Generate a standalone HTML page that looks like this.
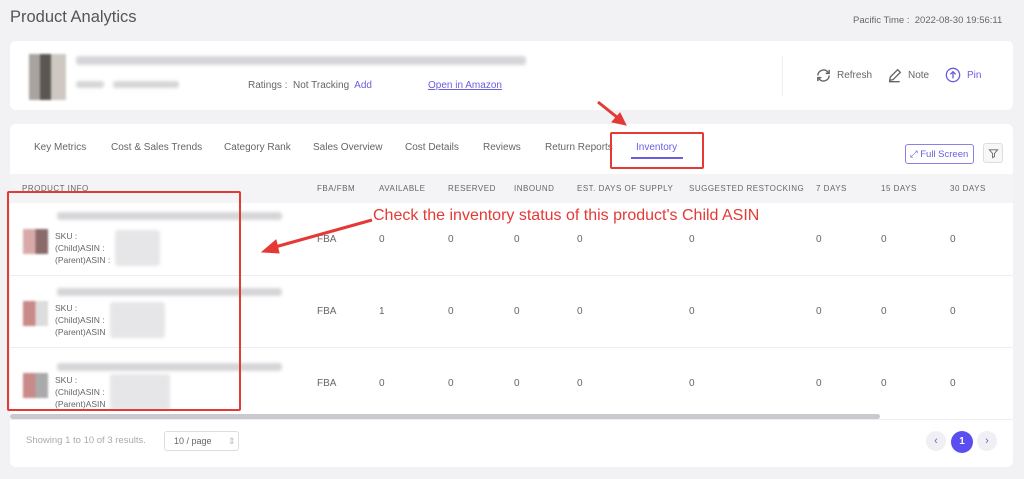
<!DOCTYPE html>
<html><head><meta charset="utf-8"><style>
*{margin:0;padding:0;box-sizing:border-box}
body{width:1024px;height:479px;background:#f2f2f4;font-family:"Liberation Sans",Arial,sans-serif;position:relative;overflow:hidden;color:#555}
.a{position:absolute}
.card{position:absolute;background:#fff;border-radius:6px}
.t{font-size:10px;color:#666;white-space:nowrap}
.h{font-size:8px;color:#666;letter-spacing:.5px;white-space:nowrap}
.blur{position:absolute;background:#d6d6d9;filter:blur(1.5px);border-radius:3px}
.red{position:absolute;border:2px solid #e53935;border-radius:2px}
</style></head><body>
<div class="a" style="left:10px;top:8px;font-size:16.5px;color:#555">Product Analytics</div>
<div class="a t" style="left:853px;top:15px;font-size:9.5px">Pacific Time :&nbsp; 2022-08-30 19:56:11</div>

<div class="card" style="left:10px;top:41px;width:1003px;height:69px">
  <div class="a" style="left:19px;top:13px;width:37px;height:46px;background:linear-gradient(90deg,#9a948e 0 30%,#3e3a36 30% 60%,#c6bfb7 60%);filter:blur(1px);opacity:.85"></div>
  <div class="blur" style="left:66px;top:15px;width:450px;height:9px"></div>
  <div class="blur" style="left:66px;top:40px;width:28px;height:7px"></div>
  <div class="blur" style="left:103px;top:40px;width:66px;height:7px"></div>
  <div class="a t" style="left:238px;top:39px">Ratings :&nbsp; Not Tracking&nbsp; <span style="color:#6a5ee0">Add</span></div>
  <div class="a t" style="left:418px;top:39px;color:#6a5ee0;text-decoration:underline">Open in Amazon</div>
  <div class="a" style="left:772px;top:15px;width:1px;height:40px;background:#eee"></div>
  <svg class="a" style="left:805px;top:26px" width="17" height="17" viewBox="0 0 24 24" fill="none" stroke="#666" stroke-width="2"><path d="M4 12a8 8 0 0 1 14-5l2 2M20 4v5h-5M20 12a8 8 0 0 1-14 5l-2-2M4 20v-5h5"/></svg>
  <div class="a t" style="left:827px;top:29px">Refresh</div>
  <svg class="a" style="left:877px;top:26px" width="16" height="16" viewBox="0 0 24 24" fill="none" stroke="#666" stroke-width="2"><path d="M4 20l1-5L16 4l4 4L9 19zM3 22h16"/></svg>
  <div class="a t" style="left:898px;top:29px">Note</div>
  <svg class="a" style="left:935px;top:26px" width="16" height="16" viewBox="0 0 24 24" fill="none" stroke="#6a5ee0" stroke-width="2"><circle cx="12" cy="12" r="10"/><path d="M12 17V8M8 11l4-4 4 4"/></svg>
  <div class="a t" style="left:957px;top:29px;color:#6a5ee0">Pin</div>
</div>

<div class="card" style="left:10px;top:124px;width:1003px;height:343px;overflow:hidden">
  <div class="a t" style="left:24px;top:18px">Key Metrics</div>
  <div class="a t" style="left:101px;top:18px">Cost &amp; Sales Trends</div>
  <div class="a t" style="left:214px;top:18px">Category Rank</div>
  <div class="a t" style="left:303px;top:18px">Sales Overview</div>
  <div class="a t" style="left:395px;top:18px">Cost Details</div>
  <div class="a t" style="left:473px;top:18px">Reviews</div>
  <div class="a t" style="left:535px;top:18px">Return Reports</div>
  <div class="a t" style="left:626px;top:18px;color:#6a5ee0">Inventory</div>
  <div class="a" style="left:621px;top:33px;width:52px;height:2px;background:#6a5ee0"></div>
  <div class="a" style="left:895px;top:20px;width:69px;height:20px;border:1px solid #8a80e8;border-radius:3px;font-size:9.5px;color:#6a5ee0;padding:4px 0 0 4px;white-space:nowrap">⤢ Full Screen</div>
  <div class="a" style="left:973px;top:19px;width:20px;height:20px;border:1px solid #ddd;border-radius:3px;background:#f7f7f7"><svg style="margin:4px 0 0 4px" width="11" height="11" viewBox="0 0 24 24" fill="none" stroke="#666" stroke-width="2"><path d="M3 4h18l-7 8v7l-4 2v-9z"/></svg></div>
  <div class="a" style="left:0;top:50px;width:1003px;height:29px;background:#f4f4f7"></div>
  <div class="a h" style="left:12px;top:60px">PRODUCT INFO</div>
  <div class="a h" style="left:307px;top:60px">FBA/FBM</div>
  <div class="a h" style="left:369px;top:60px">AVAILABLE</div>
  <div class="a h" style="left:438px;top:60px">RESERVED</div>
  <div class="a h" style="left:504px;top:60px">INBOUND</div>
  <div class="a h" style="left:567px;top:60px">EST. DAYS OF SUPPLY</div>
  <div class="a h" style="left:679px;top:60px">SUGGESTED RESTOCKING</div>
  <div class="a h" style="left:806px;top:60px">7 DAYS</div>
  <div class="a h" style="left:871px;top:60px">15 DAYS</div>
  <div class="a h" style="left:940px;top:60px">30 DAYS</div>
  <div class="a" style="left:0;top:151px;width:1003px;height:1px;background:#eee"></div>
  <div class="a" style="left:0;top:223px;width:1003px;height:1px;background:#eee"></div>
  <div class="a" style="left:0;top:290px;width:870px;height:5px;background:#c9c9d0;border-radius:3px"></div>
  <div class="a" style="left:0;top:295px;width:1003px;height:1px;background:#eee"></div>

  <div class="a" style="left:0;top:79px;width:300px;height:215px">
    <div class="blur" style="left:47px;top:9px;width:225px;height:8px"></div>
    <div class="a" style="left:13px;top:26px;width:25px;height:25px;background:linear-gradient(90deg,#d9a9a9 50%,#8a6a6a 50%);filter:blur(1px)"></div>
    <div class="a t" style="left:45px;top:27px;font-size:8.5px;line-height:12px">SKU :<br>(Child)ASIN :<br>(Parent)ASIN :</div>
    <div class="blur" style="left:105px;top:27px;width:45px;height:36px;background:#e6e6e8"></div>
    <div class="blur" style="left:47px;top:85px;width:225px;height:8px"></div>
    <div class="a" style="left:13px;top:98px;width:25px;height:25px;background:linear-gradient(90deg,#c98a8a 50%,#ddd 50%);filter:blur(1px)"></div>
    <div class="a t" style="left:45px;top:99px;font-size:8.5px;line-height:12px">SKU :<br>(Child)ASIN :<br>(Parent)ASIN</div>
    <div class="blur" style="left:100px;top:99px;width:55px;height:36px;background:#e6e6e8"></div>
    <div class="blur" style="left:47px;top:160px;width:225px;height:8px"></div>
    <div class="a" style="left:13px;top:170px;width:25px;height:25px;background:linear-gradient(90deg,#c98a8a 50%,#aaa 50%);filter:blur(1px)"></div>
    <div class="a t" style="left:45px;top:171px;font-size:8.5px;line-height:12px">SKU :<br>(Child)ASIN :<br>(Parent)ASIN</div>
    <div class="blur" style="left:100px;top:171px;width:60px;height:36px;background:#e6e6e8"></div>
  </div>
  <div class="a t" style="left:307px;top:110px">FBA</div><div class="a t" style="left:369px;top:110px">0</div><div class="a t" style="left:438px;top:110px">0</div><div class="a t" style="left:504px;top:110px">0</div><div class="a t" style="left:567px;top:110px">0</div><div class="a t" style="left:679px;top:110px">0</div><div class="a t" style="left:806px;top:110px">0</div><div class="a t" style="left:871px;top:110px">0</div><div class="a t" style="left:940px;top:110px">0</div>
  <div class="a t" style="left:307px;top:182px">FBA</div><div class="a t" style="left:369px;top:182px">1</div><div class="a t" style="left:438px;top:182px">0</div><div class="a t" style="left:504px;top:182px">0</div><div class="a t" style="left:567px;top:182px">0</div><div class="a t" style="left:679px;top:182px">0</div><div class="a t" style="left:806px;top:182px">0</div><div class="a t" style="left:871px;top:182px">0</div><div class="a t" style="left:940px;top:182px">0</div>
  <div class="a t" style="left:307px;top:254px">FBA</div><div class="a t" style="left:369px;top:254px">0</div><div class="a t" style="left:438px;top:254px">0</div><div class="a t" style="left:504px;top:254px">0</div><div class="a t" style="left:567px;top:254px">0</div><div class="a t" style="left:679px;top:254px">0</div><div class="a t" style="left:806px;top:254px">0</div><div class="a t" style="left:871px;top:254px">0</div><div class="a t" style="left:940px;top:254px">0</div>

  <div class="a t" style="left:16px;top:311px;color:#aaa;font-size:9.5px">Showing 1 to 10 of 3 results.</div>
  <div class="a t" style="left:154px;top:307px;width:75px;height:20px;border:1px solid #ddd;border-radius:3px;font-size:9px;padding:4px 0 0 9px">10 / page <span style="color:#bbb;margin-left:14px">⇕</span></div>
  <div class="a" style="left:916px;top:307px;width:20px;height:20px;border-radius:50%;background:#f0f0f4;color:#6a5ee0;font-size:11px;text-align:center;line-height:20px">‹</div>
  <div class="a" style="left:941px;top:307px;width:22px;height:22px;border-radius:50%;background:#5b4ef0;color:#fff;font-size:10px;font-weight:bold;text-align:center;line-height:22px">1</div>
  <div class="a" style="left:967px;top:307px;width:20px;height:20px;border-radius:50%;background:#f0f0f4;color:#6a5ee0;font-size:11px;text-align:center;line-height:20px">›</div>
</div>

<div class="red" style="left:610px;top:132px;width:94px;height:37px"></div>
<div class="red" style="left:7px;top:191px;width:234px;height:220px"></div>
<svg class="a" style="left:0;top:0" width="1024" height="479"><g fill="#e53935" stroke="#e53935"><path d="M598 102 L618 118" stroke-width="3"/><path d="M626 125 L612 122 L620 113 Z"/><path d="M372 220 L275 247" stroke-width="3"/><path d="M262 252 L276 240 L279 253 Z"/></g></svg>
<div class="a" style="left:373px;top:207px;font-size:16px;color:#e53935;white-space:nowrap">Check the inventory status of this product's Child ASIN</div>
</body></html>
